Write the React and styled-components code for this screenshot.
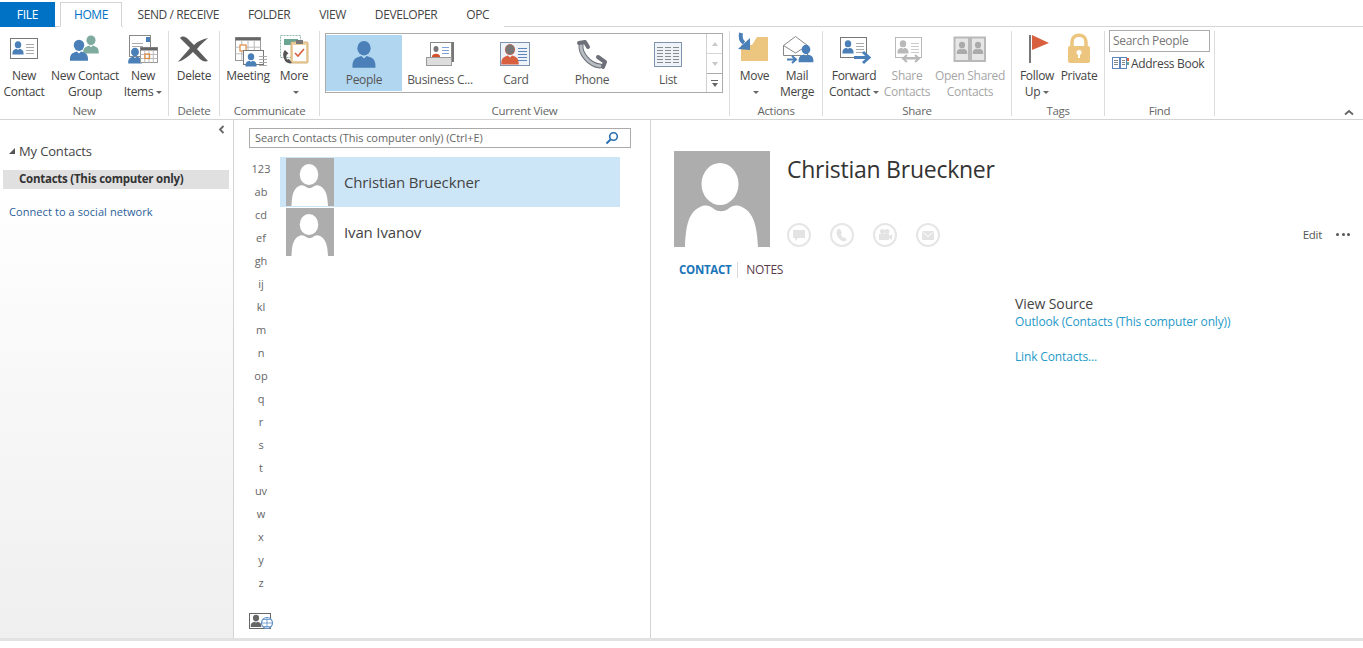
import React from "react";
import styled, { createGlobalStyle } from "styled-components";

const Global = createGlobalStyle`
  html, body { margin: 0; padding: 0; background: #fff; }
  body { font-family: "Open Sans", "Noto Sans", sans-serif; font-size: 12px; color: #444; overflow: hidden; }
`;

const Page = styled.div`
  width: 1363px;
  height: 648px;
  display: flex;
  flex-direction: column;
  letter-spacing: -0.3px;
`;

/* ---- tabs ---- */
const TabBar = styled.div`
  display: flex;
  align-items: flex-end;
  height: 27px;
  box-sizing: border-box;
  border-bottom: 1px solid #d4d4d4;
`;
const FileTab = styled.div`
  width: 55px;
  height: 25px;
  margin-bottom: -1px;
  margin-right: 5px;
  background: #0072c6;
  color: #fff;
  display: flex;
  align-items: center;
  justify-content: center;
`;
const Tab = styled.div`
  height: 25px;
  margin-bottom: -1px;
  padding: 0 13.5px;
  box-sizing: border-box;
  display: flex;
  align-items: center;
  letter-spacing: -0.4px;
  color: ${(p) => (p.$active ? "#0072c6" : "#444")};
  background: #fff;
  border: 1px solid ${(p) => (p.$active ? "#d4d4d4" : "transparent")};
  border-bottom-color: ${(p) => (p.$active ? "#fff" : "transparent")};
  ${(p) => p.$active && "width: 62px; padding: 0; justify-content: center; margin-right: 1px;"}
`;

/* ---- ribbon ---- */
const Ribbon = styled.div`
  position: relative;
  display: flex;
  height: 93px;
  box-sizing: border-box;
  padding: 4px 0 3px;
  border-bottom: 1px solid #d4d4d4;
`;
const Group = styled.div`
  width: ${(p) => p.$w}px;
  flex: none;
  box-sizing: border-box;
  border-right: 1px solid #dcdcdc;
  display: flex;
  flex-direction: column;
`;
const GroupBody = styled.div`
  flex: 1;
  display: flex;
  padding-left: ${(p) => p.$pad || 0}px;
  min-height: 0;
`;
const GroupLabel = styled.div`
  height: 16px;
  line-height: 16px;
  font-size: 11.5px;
  text-align: center;
  color: #666;
  margin-bottom: -3px;
`;
const RibbonBtn = styled.div`
  width: ${(p) => p.$w}px;
  flex: none;
  display: flex;
  flex-direction: column;
  align-items: center;
  color: ${(p) => (p.$off ? "#a6a6a6" : "#444")};
`;
const BtnIcon = styled.svg`
  width: 40px;
  height: 34px;
  margin-bottom: 3px;
  flex: none;
  overflow: visible;
`;
const BtnText = styled.div`
  line-height: 16px;
  text-align: center;
  white-space: nowrap;
`;
const Caret = styled.span`
  display: inline-block;
  width: 0;
  height: 0;
  border: 3px solid transparent;
  border-top: 3px solid #666;
  border-bottom: 0;
  margin-left: 3px;
  vertical-align: 2px;
`;
const CaretLine = styled.div`
  height: 16px;
  display: flex;
  align-items: center;
  justify-content: center;
`;
const Collapse = styled.svg`
  position: absolute;
  right: 9px;
  bottom: 3px;
  width: 10px;
  height: 7px;
`;

/* ---- gallery ---- */
const Gallery = styled.div`
  margin: 2px 0 0 5px;
  width: 398px;
  height: 60px;
  box-sizing: border-box;
  border: 1px solid #ababab;
  display: flex;
`;
const GalleryItem = styled.div`
  width: 76px;
  flex: none;
  display: flex;
  flex-direction: column;
  align-items: center;
  background: ${(p) => (p.$on ? "#b1d6f0" : "transparent")};
  height: 56px;
  margin-top: 1px;
`;
const GalleryIcon = styled.svg`
  width: 40px;
  height: 32px;
  margin-top: 3px;
  flex: none;
  overflow: visible;
`;
const GalleryText = styled.div`
  line-height: 16px;
  margin-top: 2px;
  white-space: nowrap;
  color: #555;
`;
const GalleryScroll = styled.div`
  margin-left: auto;
  width: 15px;
  border-left: 1px solid #d0d0d0;
  display: flex;
  flex-direction: column;
`;
const ScrollBtn = styled.div`
  flex: 1;
  display: flex;
  align-items: center;
  justify-content: center;
  border-bottom: 1px solid ${(p) => (p.$last ? "transparent" : "#d8d8d8")};
  &::after {
    content: "";
    border: 3px solid transparent;
    ${(p) => (p.$up ? "border-bottom: 4px solid #c8c8c8; border-top: 0;" : "border-top: 4px solid #c8c8c8; border-bottom: 0;")}
  }
`;
const ScrollMore = styled.div`
  height: 18px;
  border-top: 1px solid #ababab;
  margin-top: -1px;
  display: flex;
  flex-direction: column;
  align-items: center;
  justify-content: center;
  gap: 2px;
  &::before { content: ""; width: 7px; height: 1px; background: #666; }
  &::after { content: ""; border: 3.5px solid transparent; border-top: 4px solid #666; border-bottom: 0; }
`;

/* ---- find ---- */
const FindCol = styled.div`
  padding: 0 0 0 4px;
  display: flex;
  flex-direction: column;
`;
const FindBox = styled.div`
  width: 101px;
  height: 22px;
  box-sizing: border-box;
  margin-top: -1px;
  border: 1px solid #ababab;
  padding-left: 3px;
  line-height: 20px;
  color: #777;
`;
const AddressRow = styled.div`
  display: flex;
  align-items: center;
  gap: 2px;
  margin: 2px 0 0 3px;
  height: 18px;
  white-space: nowrap;
  svg { width: 17px; height: 12px; flex: none; }
`;

/* ---- body ---- */
const Body = styled.div`
  flex: 1;
  display: flex;
  min-height: 0;
`;
const Sidebar = styled.aside`
  position: relative;
  width: 234px;
  flex: none;
  box-sizing: border-box;
  border-right: 1px solid #d4d4d4;
  background: linear-gradient(#fff 0, #fff 60px, #efefef 100%);
  padding-top: 21px;
`;
const SideCollapse = styled.svg`
  position: absolute;
  top: 5px;
  right: 8px;
  width: 7px;
  height: 9px;
`;
const TreeHead = styled.div`
  font-size: 13px;
  line-height: 20px;
  padding-left: 9px;
  display: flex;
  align-items: center;
  gap: 4px;
  letter-spacing: -0.15px;
  &::before {
    content: "";
    width: 0;
    height: 0;
    border-style: solid;
    border-width: 0 0 6px 6px;
    border-color: transparent transparent #555 transparent;
  }
`;
const TreeItem = styled.div`
  margin: 9px 4px 0 3px;
  height: 19px;
  background: #e0e0e0;
  color: #333;
  font-weight: 700;
  line-height: 18px;
  padding-left: 16px;
  font-size: 11.5px;
  letter-spacing: -0.25px;
`;
const SocialLink = styled.div`
  margin: 15px 0 0 9px;
  font-size: 11px;
  line-height: 16px;
  letter-spacing: 0.08px;
  color: #2a6099;
`;

const ListPane = styled.section`
  width: 417px;
  flex: none;
  box-sizing: border-box;
  border-right: 1px solid #d4d4d4;
  padding: 8px 19px 0 15px;
  position: relative;
`;
const SearchBar = styled.div`
  height: 20px;
  box-sizing: border-box;
  border: 1px solid #ababab;
  display: flex;
  align-items: center;
  justify-content: space-between;
  padding: 0 11px 1px 5px;
  font-size: 11px;
  letter-spacing: -0.05px;
  color: #666;
  svg { width: 14px; height: 14px; }
`;
const ListBody = styled.div`
  display: flex;
  margin-top: 9px;
  padding-right: 11px;
`;
const IndexCol = styled.div`
  width: 24px;
  margin-right: 7px;
  flex: none;
`;
const IndexItem = styled.div`
  height: 23px;
  line-height: 23px;
  text-align: center;
  font-size: 11px;
  letter-spacing: 0;
  color: #666;
`;
const Rows = styled.div`
  flex: 1;
`;
const Row = styled.div`
  height: ${(p) => (p.$on ? 50 : 48)}px;
  display: flex;
  align-items: center;
  gap: 10px;
  padding-left: 6px;
  background: ${(p) => (p.$on ? "#cde6f7" : "transparent")};
  font-size: 15px;
  letter-spacing: -0.15px;
  color: #444;
  margin-bottom: 1px;
`;
const AvatarSvg = styled.svg`
  width: ${(p) => p.$size}px;
  height: ${(p) => p.$size}px;
  flex: none;
  display: block;
`;
const GlobeBtn = styled.svg`
  position: absolute;
  left: 15px;
  bottom: 8px;
  width: 25px;
  height: 17px;
`;

const DetailPane = styled.section`
  flex: 1;
  min-width: 0;
  padding: 31px 13px 0 23px;
`;
const Header = styled.div`
  display: flex;
  gap: 17px;
`;
const HeaderInfo = styled.div`
  flex: 1;
  display: flex;
  flex-direction: column;
`;
const Name = styled.div`
  font-size: 23px;
  line-height: 36px;
  color: #333;
  letter-spacing: -0.25px;
`;
const ActionRow = styled.div`
  margin-top: auto;
  display: flex;
  align-items: center;
  margin-left: -0.5px;
`;
const Circle = styled.div`
  width: 24px;
  height: 24px;
  box-sizing: border-box;
  border: 2px solid #e6e6e6;
  border-radius: 50%;
  margin-right: 19px;
  display: flex;
  align-items: center;
  justify-content: center;
  svg { width: 14px; height: 14px; }
`;
const EditGroup = styled.div`
  margin-left: auto;
  display: flex;
  align-items: center;
  gap: 14px;
  font-size: 11.5px;
  color: #555;
  padding-bottom: 1px;
`;
const Dots = styled.div`
  display: flex;
  gap: 2.5px;
  span { width: 3px; height: 3px; border-radius: 50%; background: #555; }
`;
const DetailTabs = styled.div`
  display: flex;
  align-items: center;
  margin: 13px 0 0 5px;
  height: 20px;
`;
const DetailTab = styled.div`
  line-height: 16px;
  font-size: ${(p) => (p.$on ? "11.5px" : "12px")};
  font-weight: ${(p) => (p.$on ? 700 : 400)};
  color: ${(p) => (p.$on ? "#1a74b8" : "#5a3a4a")};
  ${(p) => p.$on && "padding-right: 6px; margin-right: 8px; border-right: 1px solid #d8d8d8;"}
`;
const SourceBlock = styled.div`
  margin: 14px 0 0 341px;
`;
const SourceTitle = styled.div`
  font-size: 14px;
  line-height: 20px;
  letter-spacing: -0.1px;
  color: #444;
`;
const SourceLink = styled.div`
  line-height: 16px;
  font-size: 12px;
  letter-spacing: -0.15px;
  color: #1f9ac9;
  margin-bottom: ${(p) => p.$gap || 0}px;
`;

const Footer = styled.div`
  height: 10px;
  flex: none;
  border-top: 3px solid #e2e2e2;
  box-sizing: border-box;
`;

/* ---- drawings ---- */
const BLUE = "#4a7fb8";
const GREY = "#b9b9b9";

const Person = ({ x, y, s = 1, c = BLUE }) => (
  <g transform={`translate(${x} ${y}) scale(${s})`} fill={c}>
    <ellipse cx="0" cy="-4.6" rx="3.6" ry="3.9" />
    <path d="M-6.2 6C-6.4 2.6-5.4 1-3.4.3L-1.5-.4 0 1 1.5-.4 3.4.3C5.4 1 6.4 2.6 6.2 6Z" />
  </g>
);

const Lines = ({ x, y, w, n, gap = 3, c = "#aaa" }) => (
  <g stroke={c} strokeWidth="1">
    {Array.from({ length: n }, (_, i) => (
      <line key={i} x1={x} x2={x + w} y1={y + i * gap + 0.5} y2={y + i * gap + 0.5} />
    ))}
  </g>
);

const Card = ({ x, y, w = 28, h = 21, c = "#777", p = BLUE, line = "#aaa" }) => (
  <g>
    <rect x={x + 0.5} y={y + 0.5} width={w - 1} height={h - 1} fill="#fff" stroke={c} />
    <Person x={x + 8} y={y + 11} s={0.9} c={p} />
    <Lines x={x + 16} y={y + 6} w={8} n={4} c={line} />
  </g>
);

const CalGrid = ({ x, y, w, h, c = "#999" }) => {
  const cols = 4;
  const rows = 3;
  return (
    <g>
      <rect x={x} y={y} width={w} height={h} fill="#fff" stroke={c} />
      <rect x={x} y={y} width={w} height={3} fill="#666" />
      {Array.from({ length: cols - 1 }, (_, i) => (
        <line key={i} x1={x + ((i + 1) * w) / cols} x2={x + ((i + 1) * w) / cols} y1={y + 3} y2={y + h} stroke="#bbb" />
      ))}
      {Array.from({ length: rows - 1 }, (_, i) => (
        <line key={i} x1={x} x2={x + w} y1={y + 3 + ((i + 1) * (h - 3)) / rows} y2={y + 3 + ((i + 1) * (h - 3)) / rows} stroke="#bbb" />
      ))}
    </g>
  );
};

const icons = {
  newContact: <Card x={6} y={7} />,
  newGroup: (
    <g>
      <Person x={26} y={15} s={1.25} c="#7eab9e" />
      <Person x={14} y={21} s={1.45} />
    </g>
  ),
  newItems: (
    <g>
      <rect x="6.5" y="4.5" width="21" height="21" fill="#fff" stroke="#888" />
      <rect x="23" y="6" width="4" height="5" fill={BLUE} />
      <Lines x={9} y={12} w={11} n={2} />
      <Person x={12} y={26} s={1.1} />
      <CalGrid x={17.5} y={16.5} w={17} h={15} />
      <rect x="22" y="23" width="4.5" height="4.5" fill="none" stroke="#e08a3c" strokeWidth="1.2" />
    </g>
  ),
  del: (
    <path
      d="M6 7C9 4 12 6 15 9L20 14C24 10 29 8 34 7 31 10 27 13 23 18L34 30C31 31 28 30 26 28L19 21C15 25 10 29 4 31 7 27 11 23 16 17Z"
      fill="#5d5d5d"
    />
  ),
  meeting: (
    <g>
      <CalGrid x={7.5} y={6.5} w={25} h={23} />
      <rect x="12" y="14" width="6" height="6" fill="#fff" stroke="#e08a3c" strokeWidth="1.2" />
      <Card x={15} y={19} w={21} h={15} />
    </g>
  ),
  more: (
    <g>
      <rect x="6.5" y="4.5" width="20" height="22" fill="#fff" stroke="#8fb5a6" strokeDasharray="2 1" />
      <rect x="10" y="8" width="14" height="6" fill="#6aa594" />
      <rect x="17" y="11" width="17" height="21" rx="1" fill="#eccf9f" stroke="#d6b27a" />
      <rect x="19" y="14" width="13" height="16" fill="#fff" />
      <rect x="22" y="9" width="7" height="4" fill="#777" />
      <path d="M21 22l3 3 6-7" fill="none" stroke="#d9603f" strokeWidth="1.6" />
      <path d="M11 19c-3 3-2 8 1 12 2 1 4 2 6 1l-3-4-2 .5c-1-2-1-3 0-5l1.5-1Z" fill="#555" />
    </g>
  ),
  move: (
    <g>
      <path d="M6 14H17L22 6H33V30H6Z" fill="#ecc57e" />
      <path d="M6 2C5 7 6 10 9 12" fill="none" stroke={BLUE} strokeWidth="4" />
      <path d="M15 7L15 19 3 18Z" fill={BLUE} />
    </g>
  ),
  merge: (
    <g>
      <path d="M6.5 14.5L18.5 5.5 30.5 14.5V24.5H6.5Z" fill="#fff" stroke="#888" />
      <path d="M6.5 14.5L18.5 22 30.5 14.5" fill="none" stroke="#888" />
      <Person x={29} y={24} s={1.2} />
      <path d="M10 28.5H18M15 25l4 3.5-4 3.5" fill="none" stroke={BLUE} strokeWidth="2" />
    </g>
  ),
  forward: (
    <g>
      <Card x={6} y={6} w={27} h={21} />
      <path d="M20 26.5H34M29 21l6 5.5-6 5.5" fill="none" stroke={BLUE} strokeWidth="3" />
    </g>
  ),
  share: (
    <g>
      <Card x={8} y={6} w={27} h={21} c={GREY} p={GREY} line="#ccc" />
      <path d="M17 27.5H31M20 24l-4 3.5 4 3.5M28 24l4 3.5-4 3.5" fill="none" stroke={GREY} strokeWidth="2" />
    </g>
  ),
  book: (
    <g>
      <path d="M4.5 6.5H19V30H4.5ZM21 6.5H35V30H21Z" fill="#e6e6e6" stroke={GREY} strokeWidth="2" />
      <Person x={12} y={18} s={0.85} c="#aaa" />
      <Person x={28} y={18} s={0.85} c="#aaa" />
    </g>
  ),
  flag: (
    <g>
      <rect x="12" y="4" width="2" height="28" fill="#777" />
      <path d="M15 4L32 12 15 19Z" fill="#d9603f" />
    </g>
  ),
  lock: (
    <g>
      <path d="M13 16V11C13 2 27 2 27 11V16" fill="none" stroke="#ecc57e" strokeWidth="3.5" />
      <rect x="9" y="15" width="22" height="17" rx="2" fill="#ecc57e" />
      <circle cx="20" cy="21.5" r="2.5" fill="#fff" />
      <rect x="19" y="22" width="2" height="5" fill="#fff" />
    </g>
  ),
  people: <Person x={20} y={18.7} s={1.85} />,
  business: (
    <g>
      <rect x="12" y="4" width="22" height="20" fill="#777" />
      <rect x="10.5" y="4.5" width="21" height="17" fill="#fff" stroke="#888" />
      <ellipse cx="16" cy="11" rx="2.5" ry="3" fill="#777" />
      <path d="M12 18c1-3 7-3 8 0v3h-8Z" fill="#d4532b" />
      <Lines x={22} y={9} w={7} n={3} gap={3} c="#7aa3d8" />
      <rect x="6.5" y="19.5" width="25" height="8" fill="#ddd" stroke="#999" />
    </g>
  ),
  card: (
    <g>
      <rect x="4.5" y="4.5" width="29" height="23" fill="#eef3fa" stroke="#7f93ad" />
      <Person x={14} y={18} s={1.4} c="#d9603f" />
      <ellipse cx="14" cy="11.5" rx="4.5" ry="5" fill="#777" />
      <Lines x={22} y={10} w={9} n={5} gap={3} c="#5e86bd" />
    </g>
  ),
  phone: (
    <g fill="none" strokeLinecap="round">
      <path d="M9 7C8 15 17 27 28 28" stroke="#6d7078" strokeWidth="5" />
      <path d="M9 7C8 15 17 27 28 28" stroke="#b8bcc3" strokeWidth="3" />
      <path d="M7 5L13 4 16 9" stroke="#6d7078" strokeWidth="4" strokeLinejoin="round" />
      <path d="M31 29L33 24 26 19" stroke="#6d7078" strokeWidth="4" strokeLinejoin="round" />
    </g>
  ),
  list: (
    <g>
      <rect x="6.5" y="4.5" width="27" height="24" fill="#eef3fa" stroke="#7f93ad" />
      <Lines x={9} y={9} w={6} n={6} gap={3} c="#8a8a8a" />
      <Lines x={17} y={9} w={6} n={6} gap={3} c="#8a8a8a" />
      <Lines x={25} y={9} w={6} n={6} gap={3} c="#8a8a8a" />
    </g>
  ),
};

const Avatar = ({ size }) => (
  <AvatarSvg $size={size} viewBox="0 0 96 96">
    <rect width="96" height="96" fill="#adadad" />
    <ellipse cx="46" cy="33" rx="18.5" ry="21" fill="#fff" />
    <path d="M11 96C12 75 14 62 26 56 32 53 36 55 40 58 44 61 50 61 54 58 58 55 62 53 68 56 80 62 83 75 84 96Z" fill="#fff" />
  </AvatarSvg>
);

const Btn = ({ w, icon, off, lines, caret }) => (
  <RibbonBtn $w={w} $off={off}>
    <BtnIcon viewBox="0 0 40 34">{icons[icon]}</BtnIcon>
    {lines.map((t, i) => (
      <BtnText key={t}>
        {t}
        {caret === "inline" && i === lines.length - 1 && <Caret />}
      </BtnText>
    ))}
    {caret === "below" && (
      <CaretLine>
        <Caret />
      </CaretLine>
    )}
  </RibbonBtn>
);

const gallery = [
  ["people", "People", true],
  ["business", "Business C..."],
  ["card", "Card"],
  ["phone", "Phone"],
  ["list", "List"],
];

const letters = ["123", "ab", "cd", "ef", "gh", "ij", "kl", "m", "n", "op", "q", "r", "s", "t", "uv", "w", "x", "y", "z"];

const circles = [
  <path key="c" d="M1 2h12v8H6l-3 3v-3H1Z" fill="#e3e3e3" />,
  <path key="p" d="M3 1c-2 2-2 5 0 8s5 5 7 4l2-1-2.5-3-1.5 1C7 9 6 7 6 6l1-1L5 1Z" fill="#e3e3e3" />,
  <g key="v" fill="#e3e3e3">
    <circle cx="4.5" cy="3.5" r="2.5" />
    <circle cx="9" cy="3.5" r="2.5" />
    <rect x="1" y="6" width="10" height="6" />
    <path d="M11 8l3-2v6l-3-2Z" />
  </g>,
  <g key="m">
    <rect x="1" y="3" width="12" height="9" rx="1" fill="#e3e3e3" />
    <path d="M1.5 4L7 8.5 12.5 4" fill="none" stroke="#fff" />
  </g>,
];

export default function App() {
  return (
    <Page>
      <Global />
      <TabBar>
        <FileTab>FILE</FileTab>
        <Tab $active>HOME</Tab>
        <Tab>SEND / RECEIVE</Tab>
        <Tab>FOLDER</Tab>
        <Tab>VIEW</Tab>
        <Tab>DEVELOPER</Tab>
        <Tab>OPC</Tab>
      </TabBar>

      <Ribbon>
        <Group $w={169}>
          <GroupBody>
            <Btn w={48} icon="newContact" lines={["New", "Contact"]} />
            <Btn w={74} icon="newGroup" lines={["New Contact", "Group"]} />
            <Btn w={42} icon="newItems" lines={["New", "Items"]} caret="inline" />
          </GroupBody>
          <GroupLabel>New</GroupLabel>
        </Group>
        <Group $w={51}>
          <GroupBody>
            <Btn w={50} icon="del" lines={["Delete"]} />
          </GroupBody>
          <GroupLabel>Delete</GroupLabel>
        </Group>
        <Group $w={100}>
          <GroupBody $pad={5}>
            <Btn w={46} icon="meeting" lines={["Meeting"]} />
            <Btn w={46} icon="more" lines={["More"]} caret="below" />
          </GroupBody>
          <GroupLabel>Communicate</GroupLabel>
        </Group>
        <Group $w={410}>
          <GroupBody>
            <Gallery>
              {gallery.map(([icon, label, on]) => (
                <GalleryItem key={label} $on={on}>
                  <GalleryIcon viewBox="0 0 40 32">{icons[icon]}</GalleryIcon>
                  <GalleryText>{label}</GalleryText>
                </GalleryItem>
              ))}
              <GalleryScroll>
                <ScrollBtn $up />
                <ScrollBtn $last />
                <ScrollMore />
              </GalleryScroll>
            </Gallery>
          </GroupBody>
          <GroupLabel>Current View</GroupLabel>
        </Group>
        <Group $w={93}>
          <GroupBody $pad={3}>
            <Btn w={43} icon="move" lines={["Move"]} caret="below" />
            <Btn w={42} icon="merge" lines={["Mail", "Merge"]} />
          </GroupBody>
          <GroupLabel>Actions</GroupLabel>
        </Group>
        <Group $w={189}>
          <GroupBody $pad={3}>
            <Btn w={56} icon="forward" lines={["Forward", "Contact"]} caret="inline" />
            <Btn w={50} icon="share" off lines={["Share", "Contacts"]} />
            <Btn w={76} icon="book" off lines={["Open Shared", "Contacts"]} />
          </GroupBody>
          <GroupLabel>Share</GroupLabel>
        </Group>
        <Group $w={93}>
          <GroupBody $pad={4}>
            <Btn w={42} icon="flag" lines={["Follow", "Up"]} caret="inline" />
            <Btn w={42} icon="lock" lines={["Private"]} />
          </GroupBody>
          <GroupLabel>Tags</GroupLabel>
        </Group>
        <Group $w={110}>
          <GroupBody>
            <FindCol>
              <FindBox>Search People</FindBox>
              <AddressRow>
                <svg viewBox="0 0 17 12">
                  <rect x=".5" y=".5" width="7" height="11" fill="#fff" stroke="#5e86bd" />
                  <rect x="8.5" y=".5" width="6" height="11" fill="#fff" stroke="#5e86bd" />
                  <Lines x={2} y={3} w={4} n={3} gap={2} c="#888" />
                  <Lines x={10} y={3} w={3} n={3} gap={2} c="#888" />
                  <rect x="15" y="1" width="2" height="3" fill="#d9603f" />
                  <rect x="15" y="5" width="2" height="3" fill="#6aa594" />
                </svg>
                Address Book
              </AddressRow>
            </FindCol>
          </GroupBody>
          <GroupLabel>Find</GroupLabel>
        </Group>
        <Collapse viewBox="0 0 10 7">
          <path d="M1 5.5L5 2l4 3.5" fill="none" stroke="#666" strokeWidth="1.8" />
        </Collapse>
      </Ribbon>

      <Body>
        <Sidebar>
          <SideCollapse viewBox="0 0 7 9">
            <path d="M5.5 1L2 4.5 5.5 8" fill="none" stroke="#666" strokeWidth="1.8" />
          </SideCollapse>
          <TreeHead>My Contacts</TreeHead>
          <TreeItem>Contacts (This computer only)</TreeItem>
          <SocialLink>Connect to a social network</SocialLink>
        </Sidebar>

        <ListPane>
          <SearchBar>
            Search Contacts (This computer only) (Ctrl+E)
            <svg viewBox="0 0 14 14">
              <circle cx="8.5" cy="5.5" r="3.8" fill="none" stroke="#2a6fb0" strokeWidth="1.6" />
              <path d="M5.5 8.5L1.5 12.5" stroke="#2a6fb0" strokeWidth="2" />
            </svg>
          </SearchBar>
          <ListBody>
            <IndexCol>
              {letters.map((l) => (
                <IndexItem key={l}>{l}</IndexItem>
              ))}
            </IndexCol>
            <Rows>
              <Row $on>
                <Avatar size={48} />
                Christian Brueckner
              </Row>
              <Row>
                <Avatar size={48} />
                Ivan Ivanov
              </Row>
            </Rows>
          </ListBody>
          <GlobeBtn viewBox="0 0 25 17">
            <rect x=".5" y=".5" width="21" height="15" fill="#fff" stroke="#666" />
            <Person x={7} y={9} s={0.85} c="#666" />
            <circle cx="18" cy="10" r="5.5" fill="#fff" stroke="#5e8fc7" strokeWidth="1.2" />
            <path d="M12.5 10h11M18 4.5v11M14 6.5h8M14 13.5h8" stroke="#5e8fc7" strokeWidth=".8" fill="none" />
          </GlobeBtn>
        </ListPane>

        <DetailPane>
          <Header>
            <Avatar size={96} />
            <HeaderInfo>
              <Name>Christian Brueckner</Name>
              <ActionRow>
                {circles.map((c, i) => (
                  <Circle key={i}>
                    <svg viewBox="0 0 14 14">{c}</svg>
                  </Circle>
                ))}
                <EditGroup>
                  Edit
                  <Dots>
                    <span />
                    <span />
                    <span />
                  </Dots>
                </EditGroup>
              </ActionRow>
            </HeaderInfo>
          </Header>
          <DetailTabs>
            <DetailTab $on>CONTACT</DetailTab>
            <DetailTab>NOTES</DetailTab>
          </DetailTabs>
          <SourceBlock>
            <SourceTitle>View Source</SourceTitle>
            <SourceLink $gap={19}>Outlook (Contacts (This computer only))</SourceLink>
            <SourceLink>Link Contacts...</SourceLink>
          </SourceBlock>
        </DetailPane>
      </Body>
      <Footer />
    </Page>
  );
}
